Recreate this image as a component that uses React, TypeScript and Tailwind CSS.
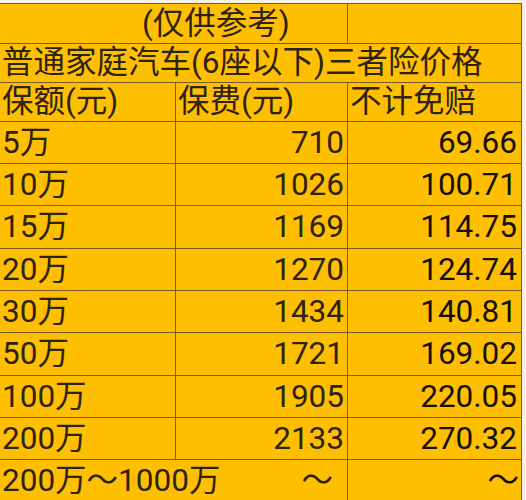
const rows = [
  { amount: '5万', fee: '710', extra: '69.66' },
  { amount: '10万', fee: '1026', extra: '100.71' },
  { amount: '15万', fee: '1169', extra: '114.75' },
  { amount: '20万', fee: '1270', extra: '124.74' },
  { amount: '30万', fee: '1434', extra: '140.81' },
  { amount: '50万', fee: '1721', extra: '169.02' },
  { amount: '100万', fee: '1905', extra: '220.05' },
  { amount: '200万', fee: '2133', extra: '270.32' },
];

const line = 'border-[#7a5a26]';

export default function App() {
  return (
    <div className="w-[526px] h-[500px] overflow-hidden bg-[#f6f1e6] pt-[3px]">
      <div
        className={`w-[522px] bg-[#fdbf00] border-t border-r ${line} text-[#2e2312] text-[31.5px] leading-none`}
        style={{ fontFamily: 'Roboto, "Noto Sans CJK SC", sans-serif' }}
      >
        {/* row 1 */}
        <div className={`flex h-[40px] border-b ${line}`}>
          <div className={`w-[348px] border-r ${line} flex items-center pl-[142px]`}>(仅供参考)</div>
          <div className="flex-1" />
        </div>
        {/* row 2 */}
        <div className={`flex h-[39px] border-b ${line} items-center pl-[2px]`}>
          普通家庭汽车(6座以下)三者险价格
        </div>
        {/* row 3 */}
        <div className={`flex h-[39px] border-b ${line}`}>
          <div className={`w-[176px] border-r ${line} flex items-center pl-[2px]`}>保额(元)</div>
          <div className={`w-[172px] border-r ${line} flex items-center pl-[2px]`}>保费(元)</div>
          <div className="flex-1 flex items-center pl-[2px]">不计免赔</div>
        </div>
        {rows.map((r, i) => (
          <div key={r.amount} className={`flex ${i === 2 || i === 5 ? 'h-[43px]' : 'h-[42px]'} border-b ${line}`}>
            <div className={`w-[176px] border-r ${line} flex items-center pl-[2px]`}>{r.amount}</div>
            <div className={`w-[172px] border-r ${line} flex items-center justify-end pr-[3px]`}>{r.fee}</div>
            <div className="flex-1 flex items-center justify-end pr-[4px] text-[#15110a]">{r.extra}</div>
          </div>
        ))}
        {/* last row */}
        <div className="flex h-[42px]">
          <div className={`w-[348px] border-r ${line} flex items-center justify-between pl-[2px] pr-[14px]`}>
            <span>200万～1000万</span>
            <span>～</span>
          </div>
          <div className="flex-1 flex items-center justify-end pr-[2px] text-[#15110a]">～</div>
        </div>
      </div>
    </div>
  );
}
